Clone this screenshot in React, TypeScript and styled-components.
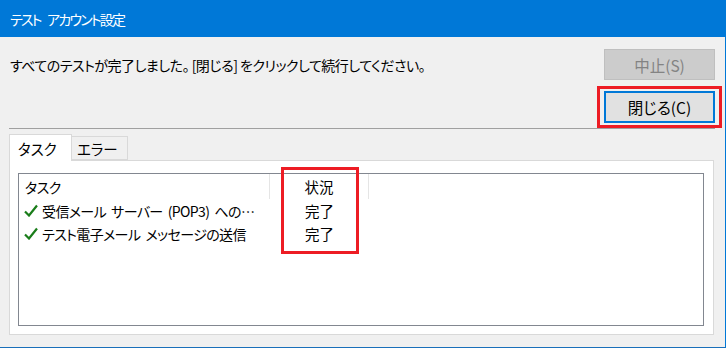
import styled, { createGlobalStyle } from "styled-components";

const GlobalStyle = createGlobalStyle`
  html, body {
    margin: 0;
    padding: 0;
    background: #f0f0f0;
  }
  body {
    font-family: "Noto Sans CJK JP", "Liberation Sans", sans-serif;
    font-feature-settings: "palt";
    color: #000;
  }
`;

const Window = styled.div`
  width: 726px;
  height: 348px;
  box-sizing: border-box;
  display: flex;
  flex-direction: column;
  background: #f0f0f0;
  border-right: 1px solid #0078d7;
  border-bottom: 1px solid #1a6fba;
`;

const TitleBar = styled.div`
  height: 37px;
  flex: none;
  display: flex;
  align-items: center;
  padding-left: 10px;
  background: #0078d7;
  color: #fff;
  font-size: 14px;
  letter-spacing: -1.8px;
  word-spacing: 5px;
  white-space: pre;
`;

const Header = styled.div`
  display: grid;
  grid-template-columns: 1fr 111px;
  row-gap: 11px;
  padding: 12px 10px 0 10px;
  align-items: center;
`;

const Message = styled.div`
  font-size: 14px;
  letter-spacing: -0.5px;
`;

const Button = styled.button<{ $primary?: boolean }>`
  width: 111px;
  height: ${({ $primary }) => ($primary ? 32 : 31)}px;
  box-sizing: border-box;
  font-family: inherit;
  font-feature-settings: "palt";
  font-size: 15.5px;
  padding: 0;
  background: ${({ $primary }) => ($primary ? "#e1e1e1" : "#cccccc")};
  border: ${({ $primary }) =>
    $primary ? "2px solid #0078d7" : "1px solid #bfbfbf"};
  color: ${({ $primary }) => ($primary ? "#000" : "#838383")};
`;

const Highlight = styled.div`
  position: relative;
  grid-column: 2;
`;

const RedFrame = styled.div<{ $inset: string }>`
  position: absolute;
  inset: ${({ $inset }) => $inset};
  border: 3px solid #ed1c24;
  pointer-events: none;
`;

const Separator = styled.div`
  height: 1px;
  margin: 5px 10px 0 9px;
  background: #a0a0a0;
`;

const TabStrip = styled.div`
  display: flex;
  align-items: flex-end;
  margin: 4px 0 0 9px;
  height: 27px;
`;

const Tab = styled.div<{ $active?: boolean }>`
  box-sizing: border-box;
  height: ${({ $active }) => ($active ? 27 : 24)}px;
  padding: 0 0 0 ${({ $active }) => ($active ? 8 : 5)}px;
  width: ${({ $active }) => ($active ? 63 : 56)}px;
  display: flex;
  align-items: center;
  font-size: 14.5px;
  background: ${({ $active }) => ($active ? "#fff" : "#f0f0f0")};
  border: 1px solid #d9d9d9;
  border-bottom: ${({ $active }) => ($active ? "none" : "1px solid #d9d9d9")};
  border-left: ${({ $active }) => ($active ? "1px solid #d9d9d9" : "none")};
  margin-bottom: ${({ $active }) => ($active ? -1 : 0)}px;
  position: relative;
  z-index: ${({ $active }) => ($active ? 1 : 0)};
`;

const TabPanel = styled.div`
  box-sizing: border-box;
  width: 705px;
  height: 175px;
  margin-left: 9px;
  padding: 12px 9px 8px 8px;
  background: #fff;
  border: 1px solid #d9d9d9;
  position: relative;
`;

const ListBox = styled.div`
  box-sizing: border-box;
  height: 100%;
  border: 1px solid #828790;
  background: #fff;
  position: relative;
`;

const Row = styled.div<{ $head?: boolean }>`
  display: grid;
  grid-template-columns: 251px 99px 1fr;
  height: ${({ $head }) => ($head ? 25 : 23)}px;
  align-items: center;
`;

const Cell = styled.div<{ $center?: boolean; $divider?: boolean }>`
  height: 100%;
  display: flex;
  align-items: center;
  justify-content: ${({ $center }) => ($center ? "center" : "flex-start")};
  padding-left: ${({ $center }) => ($center ? 0 : 4)}px;
  white-space: nowrap;
  overflow: hidden;
  border-right: ${({ $divider }) => ($divider ? "1px solid #e5e5e5" : "none")};
  box-sizing: border-box;
  font-size: ${({ $center }) => ($center ? 14.5 : 14)}px;
  letter-spacing: ${({ $center }) => ($center ? 0 : -0.6)}px;
  word-spacing: 2.5px;
`;

const TaskName = styled.span`
  overflow: hidden;
  text-overflow: ellipsis;
  white-space: nowrap;
  padding-right: 10px;
`;

const Check = () => (
  <svg width="14" height="13" viewBox="0 0 14 13" style={{ flex: "none", marginRight: 4, marginLeft: 1 }}>
    <path d="M1 7.5 L5 11.5 L13 1.5" fill="none" stroke="#1a7d1a" strokeWidth="2.2" />
  </svg>
);

const tasks = [
  { name: "受信メール サーバー (POP3) へのログオン", status: "完了" },
  { name: "テスト電子メール メッセージの送信", status: "完了" },
];

export default function App() {
  return (
    <Window>
      <GlobalStyle />
      <TitleBar>テスト アカウント設定</TitleBar>
      <Header>
        <Message>すべてのテストが完了しました。 [閉じる] をクリックして続行してください。</Message>
        <Button disabled>中止(S)</Button>
        <Highlight>
          <Button $primary>閉じる(C)</Button>
          <RedFrame $inset="-5px -7px -5px -7px" />
        </Highlight>
      </Header>
      <Separator />
      <TabStrip>
        <Tab $active>タスク</Tab>
        <Tab>エラー</Tab>
      </TabStrip>
      <TabPanel>
        <ListBox>
          <Row $head>
            <Cell $divider style={{ paddingLeft: 6 }}>タスク</Cell>
            <Cell $center $divider>状況</Cell>
            <Cell />
          </Row>
          {tasks.map((t) => (
            <Row key={t.name}>
              <Cell>
                <Check />
                <TaskName>{t.name}</TaskName>
              </Cell>
              <Cell $center>{t.status}</Cell>
              <Cell />
            </Row>
          ))}
        </ListBox>
        <RedFrame $inset="6px auto auto 271px" style={{ width: 78, height: 87, boxSizing: "border-box" }} />
      </TabPanel>
    </Window>
  );
}
